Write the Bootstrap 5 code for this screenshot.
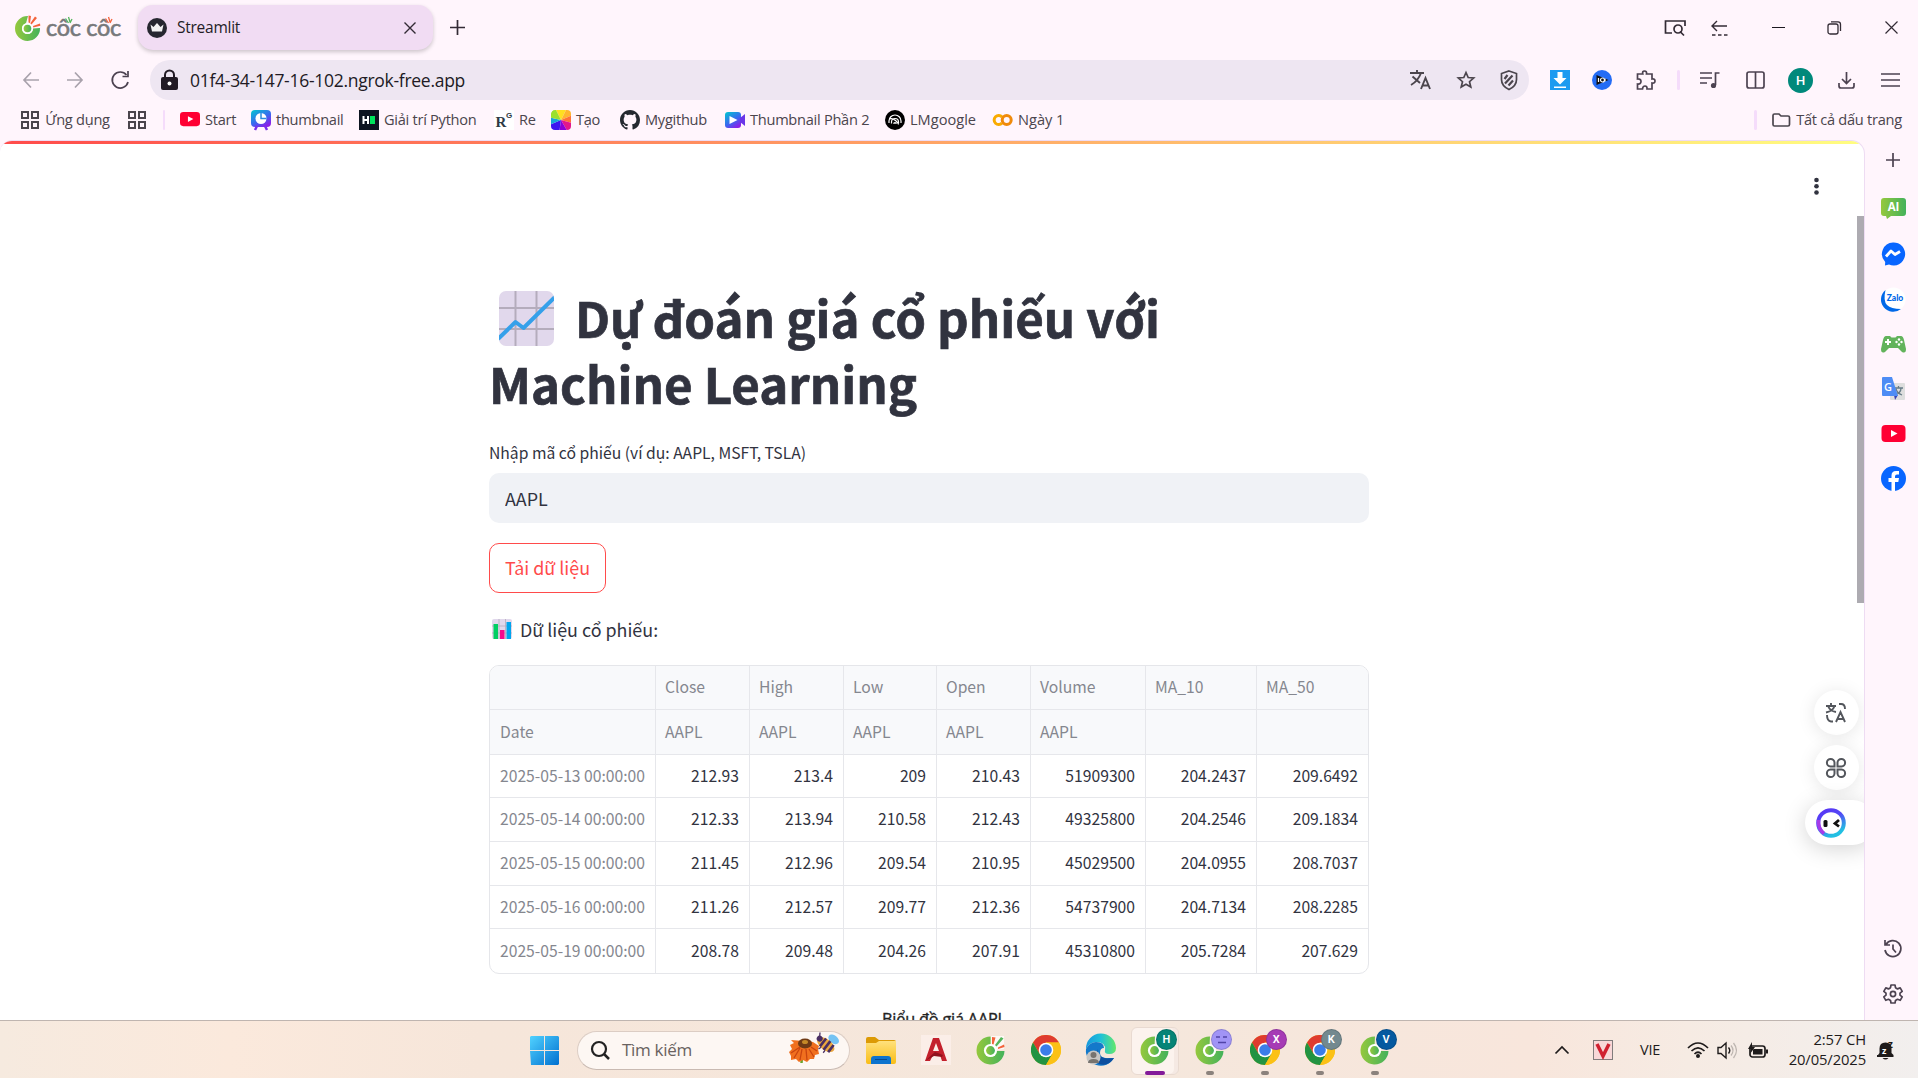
<!DOCTYPE html>
<html lang="vi">
<head>
<meta charset="utf-8">
<title>Streamlit</title>
<link href="https://cdn.jsdelivr.net/npm/bootstrap@5.3.0/dist/css/bootstrap.min.css" rel="stylesheet">
<style>
html,body{height:100%}
body{background:#fff5fc;font-family:"Open Sans","Noto Sans",sans-serif;color:#4b454d;overflow:hidden}
svg{display:block;flex:none;overflow:visible}
.ln{fill:none;stroke:currentColor;stroke-width:1.7}
.slot{flex:none;display:flex;align-items:center;justify-content:center}
.tabs-row{height:55px;color:#332b35}
.brand-box{width:138px;padding-left:13px}
.brand-name{font:400 23.5px/1 Lato,sans-serif;color:#77797b;-webkit-text-stroke:.6px #77797b;margin-left:3px;letter-spacing:-.3px;white-space:nowrap}
.tab-pill{width:295px;height:45px;margin-top:5px;border-radius:15px;background:#f1dcf3;box-shadow:0 2px 4px #0003;padding:0 9px 0 9px}
.tab-title{font-size:15.5px;color:#241d26;letter-spacing:-.25px;margin-left:10px}
.tools-row{height:50px}
.omni{width:1379px;height:40px;border-radius:20px;background:#eee6f2;padding-left:11px}
.url{font-size:17.5px;letter-spacing:-.28px;color:#211a24;margin-left:12px}
.marks-row{height:35px;font-size:14.6px;letter-spacing:-.27px;color:#4b454d;white-space:nowrap;padding:0 0 5px 21px}
.mk{flex:none;display:flex;align-items:center}
.mk svg{margin-right:5px}
.vsep{width:3px;height:20px;background:#f5dcfb;border-radius:2px;flex:none}
.stage{height:880px}
.view{width:1865px;background:#fff;border:1px solid #eedcf3;border-width:1px 1px 0 0;border-radius:12px 14px 0 0;overflow:hidden;position:relative}
.decor{height:3px;background:linear-gradient(90deg,#ff4b4b,#fffd80)}
.side{width:53px;color:#4c4250;padding:0 0 4px 3px}
.app{width:880px;margin:140px 0 0 489px;font-family:"Noto Sans CJK JP","Noto Sans",sans-serif;color:#31333f}
.app h1{font-size:49.2px;line-height:66px;font-weight:700;margin:0;color:#31333f;white-space:nowrap;height:132px;-webkit-text-stroke:.7px #31333f}
.h-ico{display:inline-block;margin:0 21px 0 10px;position:relative;top:3px;vertical-align:-5px}
.lab{font-size:15.7px;line-height:24px;margin-top:25px}
.inp{height:50px;border:0;background:#f0f2f6;border-radius:10px;margin-top:8px;padding:0 16px 1px;font-size:17.9px;color:#31333f;box-shadow:none}
.go{width:117px;height:50px;border:1px solid #ff4b4b;color:#ff4b4b;border-radius:10px;margin-top:20px;padding:0 0 1px;font-size:17.9px;background:#fff}
.cap{font-size:17.9px;height:32px;margin-top:20px}
.frame{border:1px solid #e5e6ea;border-radius:10px;overflow:hidden;margin-top:20px;height:309px}
.frame table{table-layout:fixed;width:880px;margin:0 -1px 0 -1px;border-collapse:separate;border-spacing:0;font-size:15.7px}
.frame th,.frame td{height:43.7px;padding:0 10px;border-right:1px solid #e6e7eb;border-bottom:1px solid #e6e7eb;line-height:1.2;font-weight:400;text-align:right;vertical-align:middle}
.frame thead th{background:#f8f9fb;color:#85878f;text-align:left;height:44.3px;padding-left:9px}
.frame tbody th,.frame tr>*:first-child{color:#85878f;text-align:left;padding-left:11px;white-space:nowrap}
.frame tr>*:last-child{border-right:0;padding-right:11px}
.frame tbody tr:last-child>*{border-bottom:0}
.plot-title{font:500 16.3px/20px "Open Sans",sans-serif;color:#222;margin:35px 0 0 393px;-webkit-text-stroke:.35px #222;letter-spacing:-.2px}
.kebab{position:absolute;left:1811px;top:36px}
.thumb{position:absolute;right:0;top:75px;width:7px;height:387px;background:#adabb1}
.fab{position:absolute;left:1814px;width:45px;height:45px;border-radius:50%;background:#fff;box-shadow:0 2px 18px #0000001a;display:flex;align-items:center;justify-content:center;color:#53565c;padding-right:2px}
.fab-a{top:549px}.fab-b{top:604px}
.fab-c{top:659px;left:1805px;width:70px;border-radius:23px;padding-right:18px;box-shadow:0 4px 22px #0000002b}
.taskbar{height:58px;border-top:1px solid #bfb5b0;background:linear-gradient(90deg,#f6eadf 0,#fbe9dc 12%,#f6e6da 25%,#f5e7dc 60%,#f8e6dc 80%,#f6ebe3 88%,#f2efee 100%);color:#1e1b1b;font-family:"Open Sans",sans-serif;padding:1px 0 0 530px}
.find{width:273px;height:39px;border-radius:20px;background:#fdf7f3;border:1px solid #dccdc4;border-bottom-color:#c9bab2;padding:0 11px 0 13px;margin-left:18px}
.find span{font-size:17px;color:#69625f;letter-spacing:-.3px;margin-left:12px}
.tk{width:54.9px;height:57px;position:relative;display:flex;align-items:center;justify-content:center;flex:none}
.tk-on{position:absolute;left:3px;top:5px;width:48px;height:48px;border-radius:6px;background:#fcf3ee;border:1px solid #e9dad1;box-shadow:inset -4px 0 #f5e9e3}
.tk>svg{position:relative}
.dot{position:absolute;bottom:4px;width:8px;height:4px;border-radius:2px;background:#8b827d}
.tk-on + .dot{width:20px;background:#831a99}
.who{position:absolute;left:28px;top:7px;width:21px;height:21px;border-radius:50%;color:#fff;font:600 11px/20px Roboto,sans-serif;text-align:center;border:1px solid #0002}
.clock{font-size:14.8px;line-height:20px;text-align:right;letter-spacing:-.12px;width:100px;margin:-2px 11px 0 -8px}
</style>
<script src="https://cdn.jsdelivr.net/npm/bootstrap@5.3.0/dist/js/bootstrap.bundle.min.js"></script>
</head>
<body class="d-flex flex-column">
<svg width="0" height="0" class="position-absolute">
<defs>
<linearGradient id="gc"><stop stop-color="#95c83d"/><stop offset="1" stop-color="#43b25b"/></linearGradient>
<linearGradient id="gw" x2="1" y2="1"><stop stop-color="#51d2ff"/><stop offset="1" stop-color="#0070d0"/></linearGradient>
<linearGradient id="gf" y2="1" x2="0"><stop stop-color="#ffe17d"/><stop offset="1" stop-color="#f9bd16"/></linearGradient>
<linearGradient id="ge" x2="1"><stop stop-color="#1698de"/><stop offset=".5" stop-color="#20c1d7"/><stop offset="1" stop-color="#64e86a"/></linearGradient>
<linearGradient id="gt" x2=".7" y2="1"><stop stop-color="#00c9cf"/><stop offset=".6" stop-color="#3a68f0"/><stop offset="1" stop-color="#8b20e8"/></linearGradient>
<linearGradient id="gr" x2=".5" y2="1"><stop stop-color="#5832f5"/><stop offset=".45" stop-color="#5448f5"/><stop offset="1" stop-color="#22bfe2"/></linearGradient>
<symbol id="coc" viewBox="0 0 30 30"><path d="M15 1.500A14 14 0 1 0 28.500 16L19 16A4.500 4.500 0 1 1 14.500 11.500Z" fill="url(#gc)"/><circle cx="14.500" cy="15.500" r="6.600" fill="#fff"/><circle cx="14.500" cy="15.500" r="4.400" fill="url(#gc)"/></symbol>
<symbol id="rays" viewBox="0 0 30 30"><path d="M14.500 1L28 1v13l-6 1-7-5z" fill="#fff" opacity=".75"/><path d="M16 2l3.500.5-2 7-1.500-.5z" fill="#f4643c"/><path d="M25 2l2.500 1.500-7 8-1.500-1.500z" fill="#54b65b"/><path d="M28 9.500l.5 2.500-6.500 2v-1.500z" fill="#f4643c"/></symbol>
<symbol id="chrome" viewBox="0 0 30 30"><circle cx="15" cy="15" r="15" fill="#fbc116"/><path d="M2 7.500A15 15 0 0 1 28 7.500H15L8.500 18.750z" fill="#df3b2f"/><path d="M2 7.500A15 15 0 0 0 15 30L21.500 18.750 8.500 18.750z" fill="#229342"/><path d="M15 30A15 15 0 0 0 28 7.500H15L21.500 18.750z" fill="#fbc116"/><circle cx="15" cy="15" r="7.300" fill="#fff"/><circle cx="15" cy="15" r="5.800" fill="#3b7de9"/></symbol>
<symbol id="yt" viewBox="0 0 24 18"><rect width="24" height="17" rx="4" fill="#ff0033"/><path d="M9.500 5v7l6.500-3.500z" fill="#fff"/></symbol>
<symbol id="apps" viewBox="0 0 18 18"><path d="M1 1h6v6H1zM11 1h6v6h-6zM1 11h6v6H1zM11 11h6v6h-6z" class="ln" style="stroke-width:2"/></symbol>
</defs>
</svg>

<header class="tabs-row d-flex align-items-center">
  <div class="brand-box slot justify-content-start">
    <svg width="30" height="30" viewBox="0 0 30 30"><path d="M15 3A12.500 12.500 0 1 0 27 15L20 15.500A5.500 5.500 0 1 1 13 10.200Z" fill="url(#gc)"/><circle cx="14.500" cy="15.500" r="5.500" fill="#fff"/><circle cx="14.500" cy="15.500" r="3.800" fill="url(#gc)"/><path d="M15.500 2.500l2.500.5-1 7-1.500-.5zM22 3.500l2 1.500-5.500 6.500-1.200-1.200zM27 10.500l.3 2.200-7 1.800-.3-1.500z" fill="#f4643c"/></svg>
    <span class="brand-name position-relative">côc côc<svg class="position-absolute" style="left:0;top:0" width="75" height="10"><path d="M19.500 2.500l3 4.500M22.500 1l1.500 5M26 3l-2 4" stroke="#54b65b" stroke-width="1.300"/><path d="M59.500 2.500l3 4.500M62.500 1l1.500 5M66 3l-2 4" stroke="#f4643c" stroke-width="1.300"/></svg></span>
  </div>
  <div class="tab-pill d-flex align-items-center align-self-start">
    <svg width="20" height="20" viewBox="0 0 20 20"><circle cx="10" cy="10" r="10" fill="#262730"/><path d="M3.500 6.500l3 2.500L10 5l3.500 4 3-2.500L15 13.500H5z" fill="#f2f2f2"/></svg>
    <span class="tab-title me-auto">Streamlit</span>
    <svg class="me-2" width="12" height="12"><path class="ln" style="stroke-width:1.400" d="M.5.5l11 11M11.500.5l-11 11"/></svg>
  </div>
  <div class="slot" style="width:49px"><svg width="15" height="15"><path class="ln" d="M7.500 0v15M0 7.500h15"/></svg></div>
  <div class="ms-auto d-flex">
    <div class="slot" style="width:22px"><svg width="22" height="18"><path class="ln" d="M8 14H1.500V2H21v5M20 16.500l-4-4"/><circle class="ln" cx="14" cy="10" r="4"/></svg></div>
    <div class="slot" style="width:66px"><svg width="17" height="16"><path class="ln" style="stroke-width:1.400" d="M16 6H1M6 1L1 6l5 5"/><path class="ln" style="stroke-width:1.400" stroke-dasharray="3.500 2.500" d="M1 15h16"/></svg></div>
    <div class="slot" style="width:52px"><svg width="13" height="12"><path d="M0 5.500h13" stroke="#1c1820"/></svg></div>
    <div class="slot" style="width:60px"><svg width="14" height="14"><rect class="ln" style="stroke-width:1.300" x="1" y="3" width="10" height="10" rx="2"/><path class="ln" style="stroke-width:1.300" d="M4 .8h7q2.500 0 2.500 2.500V10"/></svg></div>
    <div class="slot" style="width:54px"><svg width="13" height="13"><path class="ln" style="stroke-width:1.200" d="M.5.500l12 12M12.500.500l-12 12"/></svg></div>
  </div>
</header>

<nav class="tools-row d-flex align-items-center">
  <div class="d-flex" style="padding-left:8px;width:150px">
    <div class="slot" style="width:45px;color:#a9a2ac"><svg width="16" height="16"><path class="ln" d="M16 8H1M8 .500L1 8l7 7.500"/></svg></div>
    <div class="slot" style="width:44px;color:#a9a2ac"><svg width="16" height="16"><path class="ln" d="M0 8h15M8 .500L15 8l-7 7.500"/></svg></div>
    <div class="slot" style="width:46px;color:#4c4250"><svg width="18" height="18"><path class="ln" d="M15.500 4A8 8 0 1 0 17 11"/><path class="ln" d="M17 0v5.500h-5.500"/></svg></div>
  </div>
  <div class="omni d-flex align-items-center">
    <svg width="17" height="20"><rect y="7" width="17" height="13" rx="2" fill="#211a24"/><path d="M4 8V5a4.500 4.500 0 0 1 9 0v3" fill="none" stroke="#211a24" stroke-width="2"/><circle cx="8.500" cy="13.500" r="2" fill="#fff"/></svg>
    <span class="url me-auto">01f4-34-147-16-102.ngrok-free.app</span>
    <div class="slot" style="width:45px"><svg width="21" height="20"><path class="ln" style="stroke-width:1.900" d="M0 3h14M7 0v3M2.500 6.500L10 13M11 3Q8 11 1 15M11 19l4.500-11L20 19M12.500 15.500h6"/></svg></div>
    <div class="slot" style="width:45px"><svg width="18" height="18" viewBox="0 0 18 18"><path class="ln" d="M9 1.500l2.200 5 5.500.5-4.200 3.700 1.300 5.300L9 13.200 4.200 16l1.300-5.300L1.300 7l5.500-.5z"/></svg></div>
    <div class="slot" style="width:41px"><svg width="18" height="21"><path class="ln" d="M9 1l7.500 2.500v6Q16.500 16 9 19.500 1.500 16 1.500 9.500v-6z"/><path class="ln" style="stroke-width:2.200" d="M4.500 9l3-4M5 13.500l7.500-8M8.500 15.500l4.500-5"/></svg></div>
  </div>
  <div class="d-flex align-items-center" style="margin-left:10px;color:#4c4250">
    <div class="slot" style="width:42px"><svg width="20" height="20"><path fill="#1d9bf0" d="M0 0h20v20H0z"/><path fill="#fff" d="M7.500 2h5v6h4L10 14.500 3.500 8h4zM4 16.500h12V18H4z"/></svg></div>
    <div class="slot" style="width:42px"><svg width="20" height="20"><circle cx="10" cy="10" r="10" fill="#246cf5"/><path d="M4.500 5l6 2.500L16.500 10l-6 2.500L4.500 15z" fill="#111"/><circle cx="10.500" cy="10" r="2" fill="none" stroke="#fff" stroke-width="1.200"/><path d="M6.500 8v4M13 8.500v3" stroke="#fff" stroke-width="1.200"/></svg></div>
    <div class="slot" style="width:46px"><svg width="20" height="20"><path class="ln" d="M1.500 4h5.300Q6 1 8.500 1T10.500 4H16v5q3-.5 3 2t-3 2v6h-5q.3-3-2-3t-2.500 3h-5v-5q3.500.3 3.500-2.500T1.500 9z"/></svg></div>
    <div class="slot" style="width:18px"><span class="vsep"></span></div>
    <div class="slot" style="width:46px"><svg width="20" height="17"><path class="ln" d="M0 1h12M0 6h12M0 11h7M19.500 1H15.500v12"/><circle cx="13.500" cy="13.500" r="2.600" fill="currentColor"/></svg></div>
    <div class="slot" style="width:45px"><svg width="19" height="18"><rect class="ln" x="1" y="1" width="17" height="16" rx="2"/><path class="ln" d="M9.500 1v16"/></svg></div>
    <div class="slot" style="width:45px"><span class="slot rounded-circle text-white" style="width:25px;height:25px;background:#00897b;font:500 13px Roboto">H</span></div>
    <div class="slot" style="width:46px"><svg width="17" height="17"><path class="ln" d="M8.500 0v11M4 7l4.500 4.500L13 7M1 11v3q0 2 2 2h11q2 0 2-2v-3"/></svg></div>
    <div class="slot" style="width:43px"><svg width="19" height="14"><path class="ln" d="M0 1h19M0 7h19M0 13h19"/></svg></div>
  </div>
</nav>

<div class="marks-row d-flex align-items-center">
  <div class="mk" style="width:107px"><svg width="18" height="18"><use href="#apps"/></svg>&hairsp;Ứng dụng</div>
  <div class="mk" style="width:35px"><svg width="18" height="18"><use href="#apps"/></svg></div>
  <span class="vsep" style="margin-right:15px;width:2px"></span>
  <div class="mk" style="width:71px"><svg width="20" height="15"><use href="#yt"/></svg>Start</div>
  <div class="mk" style="width:108px"><svg width="20" height="20"><rect width="20" height="17" rx="4" fill="url(#gt)"/><path d="M6 16l-2 4M14 16l2 4" stroke="#7a30ea" stroke-width="2.500"/><circle cx="10" cy="8.500" r="5.500" fill="#fff"/><path d="M10 3v5.500h5.500" fill="none" stroke="#2a8ae0" stroke-width="1.500"/></svg>thumbnail</div>
  <div class="mk" style="width:135px"><svg width="20" height="20"><path d="M0 0h20v20H0z" fill="#0d1420"/><path d="M4.500 6v8M9 6v8M4 10h5" stroke="#fff" stroke-width="2"/><path d="M11 6h5v8h-5z" fill="#00e35c"/></svg>Giải trí Python</div>
  <div class="mk" style="width:57px"><svg width="20" height="20"><path d="M0 0h20v20H0z" fill="#fff"/><text x="1.500" y="17" font-family="Liberation Serif" font-weight="700" font-size="15" fill="#2d3b45">R</text><text x="12" y="8" font-family="Liberation Sans" font-size="8" font-weight="700" fill="#2d3b45">G</text></svg>Re</div>
  <div class="mk" style="width:69px"><svg width="20" height="20"><clipPath id="rc"><rect width="20" height="20" rx="4"/></clipPath><g clip-path="url(#rc)"><path d="M10 10L4-2h12z" fill="#ffdf20"/><path d="M10 10l6-12 8 6z" fill="#ffb52e"/><path d="M10 10l14-6v10z" fill="#ff7137"/><path d="M10 10l14 4-6 10z" fill="#e3178b"/><path d="M10 10l8 14H8z" fill="#8a00d8"/><path d="M10 10L8 24-4 16z" fill="#3c14f0"/><path d="M10 10L-4 16V7z" fill="#16a5d8"/><path d="M10 10L-4 7 4-2z" fill="#9be02c"/></g></svg>Tạo</div>
  <div class="mk" style="width:105px"><svg width="20" height="20" viewBox="0 0 16 16"><path fill="#24292f" d="M8 0C3.580 0 0 3.580 0 8c0 3.540 2.290 6.530 5.470 7.590.4.070.55-.17.55-.38 0-.19-.01-.82-.01-1.490-2.010.37-2.530-.49-2.690-.94-.09-.23-.48-.94-.82-1.130-.28-.15-.68-.52-.01-.53.63-.01 1.080.58 1.230.82.72 1.210 1.870.87 2.330.66.070-.52.280-.87.510-1.070-1.780-.2-3.640-.89-3.640-3.950 0-.87.310-1.590.82-2.150-.08-.2-.36-1.020.08-2.120 0 0 .67-.21 2.200.82.64-.18 1.320-.27 2-.27s1.360.09 2 .27c1.530-1.040 2.200-.82 2.200-.82.44 1.100.16 1.920.08 2.120.51.560.82 1.270.82 2.150 0 3.070-1.870 3.750-3.650 3.950.29.250.54.730.54 1.480 0 1.070-.01 1.930-.01 2.200 0 .21.150.46.550.38A8.010 8.010 0 0 0 16 8c0-4.420-3.580-8-8-8z"/></svg>Mygithub</div>
  <div class="mk" style="width:160px"><svg width="20" height="17"><rect y="1" width="16" height="16" rx="3" fill="url(#gt)"/><path d="M15 7l5-4v12l-5-4z" fill="#6a35e8"/><path d="M4.500 5v8l8-4z" fill="#fff"/></svg>Thumbnail Phần 2</div>
  <div class="mk" style="width:108px"><svg width="20" height="20"><circle cx="10" cy="10" r="10"/><path d="M4 13V11a6 6 0 0 1 12 0v2M6.500 13.500V12a3.500 3.500 0 0 1 7 0v1.500M9 14v-1a1.500 1.500 0 0 1 2 0v1M4.500 9q3-1 6 1.500t3 4" stroke="#fff" stroke-width="1.200" fill="none"/></svg><span style="letter-spacing:0">LMgoogle</span></div>
  <div class="mk"><svg width="20" height="12"><path d="M9 3a4.500 4.500 0 1 0 0 6" fill="none" stroke="#f9ab00" stroke-width="3"/><circle cx="13.700" cy="6" r="4.500" fill="none" stroke="#f08a0a" stroke-width="3"/></svg><span style="letter-spacing:0">Ngày 1</span></div>
  <span class="vsep ms-auto" style="margin-right:15px"></span>
  <div class="mk" style="width:146px"><svg width="18" height="14"><path class="ln" d="M1 2.500Q1 1 2.500 1H7l2 2h7q1.500 0 1.500 1.500v7Q17.500 13 16 13H2.500Q1 13 1 11.500z"/></svg>&hairsp;Tất cả dấu trang</div>
</div>

<div class="stage d-flex">
  <main class="view">
    <div class="decor"></div>
    <div class="kebab"><svg width="11" height="18"><g fill="#31333f"><circle cx="5.500" cy="3" r="2.300"/><circle cx="5.500" cy="9.300" r="2.300"/><circle cx="5.500" cy="15.500" r="2.300"/></g></svg></div>
    <div class="app">
      <h1><svg class="h-ico" width="55" height="55" viewBox="0 0 55 55"><clipPath id="cc"><rect width="55" height="55" rx="7"/></clipPath><g clip-path="url(#cc)"><path d="M0 0h55v55H0z" fill="#e1d8ec"/><path d="M16.500 0v55M37.500 0v55M0 17h55M0 38h55" stroke="#b4acbc" stroke-width="2"/><path d="M-1 48L16.500 31l8 6L56 6" fill="none" stroke="#35a0ea" stroke-width="4" stroke-linejoin="round"/></g></svg>Dự đoán giá cổ phiếu với<br>Machine Learning</h1>
      <div class="lab">Nhập mã cổ phiếu (ví dụ: AAPL, MSFT, TSLA)</div>
      <input class="inp form-control" value="AAPL">
      <button class="go btn">Tải dữ liệu</button>
      <div class="cap d-flex align-items-center"><svg style="margin:0 8px 0 3px" width="20" height="20"><rect width="20" height="20" rx="2" fill="#e1d8ec"/><path d="M0 7h20M0 14h20M7 0v20M13.500 0v20" stroke="#b4acbc" stroke-width=".8"/><path fill="#00cf63" d="M1.500 5H6v15H1.500z"/><path fill="#f70a8d" d="M8 11h4.500v9H8z"/><path fill="#00a6ed" d="M14.500 3H19v17h-4.500z"/></svg>Dữ liệu cổ phiếu:</div>
      <div class="frame"><table>
        <colgroup><col style="width:167px"><col style="width:94px"><col style="width:94px"><col style="width:93px"><col style="width:94px"><col style="width:115px"><col style="width:111px"><col></colgroup>
        <thead><tr><th></th><th>Close</th><th>High</th><th>Low</th><th>Open</th><th>Volume</th><th>MA_10</th><th>MA_50</th></tr>
        <tr><th>Date</th><th>AAPL</th><th>AAPL</th><th>AAPL</th><th>AAPL</th><th>AAPL</th><th></th><th></th></tr></thead>
        <tbody>
        <tr><th>2025-05-13 00:00:00</th><td>212.93</td><td>213.4</td><td>209</td><td>210.43</td><td>51909300</td><td>204.2437</td><td>209.6492</td></tr>
        <tr><th>2025-05-14 00:00:00</th><td>212.33</td><td>213.94</td><td>210.58</td><td>212.43</td><td>49325800</td><td>204.2546</td><td>209.1834</td></tr>
        <tr><th>2025-05-15 00:00:00</th><td>211.45</td><td>212.96</td><td>209.54</td><td>210.95</td><td>45029500</td><td>204.0955</td><td>208.7037</td></tr>
        <tr><th>2025-05-16 00:00:00</th><td>211.26</td><td>212.57</td><td>209.77</td><td>212.36</td><td>54737900</td><td>204.7134</td><td>208.2285</td></tr>
        <tr><th>2025-05-19 00:00:00</th><td>208.78</td><td>209.48</td><td>204.26</td><td>207.91</td><td>45310800</td><td>205.7284</td><td>207.629</td></tr>
        </tbody></table></div>
      <div class="plot-title">Biểu đồ giá AAPL</div>
    </div>
    <div class="thumb"></div>
    <div class="fab fab-a"><svg width="20" height="20"><path class="ln" style="stroke-width:1.900" d="M0 3h10M5 0v3M2 3q2 5 8 6M8.500 3Q7 8 0 9.500M13 1h2q4 0 4 5M1 12q0 6 4 6.500h2M10 19l4.500-10L19 19M11.500 16h6"/></svg></div>
    <div class="fab fab-b"><svg width="20" height="20"><path class="ln" style="stroke-width:2" d="M8.500 8.500H4.500A3.800 3.800 0 1 1 8.500 4.500zM11.500 8.500V4.500A3.800 3.800 0 1 1 15.500 8.500zM8.500 11.500V15.500A3.800 3.800 0 1 1 4.500 11.500zM11.500 11.500H15.500A3.800 3.800 0 1 1 11.500 15.500z"/></svg></div>
    <div class="fab fab-c"><svg width="30" height="30"><circle cx="15" cy="15" r="12.800" fill="#fff" stroke="url(#gr)" stroke-width="4"/><path d="M2.500 12Q2 21 8 25.500" fill="none" stroke="#a63be8" stroke-width="3.500"/><rect x="7.500" y="12" width="4" height="7" rx="1.500" fill="#111"/><path d="M23 12l-4 3.500 4 3" fill="none" stroke="#111" stroke-width="2.800"/></svg></div>
  </main>
  <aside class="side d-flex flex-column align-items-center">
    <div class="slot" style="height:40px"><svg width="14" height="14"><path class="ln" d="M7 0v14M0 7h14"/></svg></div>
    <div class="slot" style="height:56px"><svg width="25" height="21"><path d="M3 0h19q3 0 3 3v12q0 3-3 3H10l-4 3-1-3H3q-3 0-3-3V3q0-3 3-3z" fill="url(#gc)"/><text x="12.500" y="13" text-anchor="middle" font-family="Open Sans" font-weight="700" font-size="11.500" fill="#fff">AI</text></svg></div>
    <div class="slot" style="height:35px"><svg width="24" height="24"><path d="M12 .5a11.500 11.500 0 1 1-4 22L4 23.500l.2-3.500A11.500 11.500 0 0 1 12 .5z" fill="#0866ff"/><path d="M5 14.500l5-5.500 4 3.500 5-3" stroke="#fff" stroke-width="2.800" fill="none" stroke-linejoin="round"/></svg></div>
    <div class="slot" style="height:56px"><svg width="25" height="25"><circle cx="12.500" cy="12.500" r="12" fill="#fff"/><path d="M4.500 3A12 12 0 0 0 20 22Q10 22 6 18T4.500 3z" fill="#0068e8"/><text x="14" y="14" text-anchor="middle" font-family="Lato" font-weight="900" font-size="8.500" fill="#0068e8">Zalo</text></svg></div>
    <div class="slot" style="height:34px"><svg width="25" height="18" viewBox="0 0 25 18"><path d="M5 1h4l1.500 1.500h4L16 1h4q2 0 3 4l2 9q0 5-4 3l-4-4H8l-4 4q-4 2-4-3l2-9q1-4 3-4z" fill="#62b35b"/><path d="M7 4v6M4 7h6" stroke="#fff" stroke-width="2"/><g fill="#fff"><circle cx="18" cy="4.500" r="1.200"/><circle cx="18" cy="9.500" r="1.200"/><circle cx="15.500" cy="7" r="1.200"/><circle cx="20.500" cy="7" r="1.200"/></g></svg></div>
    <div class="slot" style="height:55px"><svg width="25" height="24"><rect x="9" y="6" width="15" height="17" rx="1" fill="#dedede"/><path d="M13 11h9M17.500 9v2M14 18q6-2 6-7M15 12q1 4 6 6" stroke="#667b87" stroke-width="1.300" fill="none"/><path d="M13 18h4l-3 5z" fill="#3742b0"/><path d="M2 0h9l6 19H2q-1 0-1-1V1q0-1 1-1z" fill="#4d8cf5"/><text x="3" y="14" font-family="Open Sans" font-weight="600" font-size="11" fill="#fff">G</text></svg></div>
    <div class="slot" style="height:35px"><svg width="25" height="18"><use href="#yt"/></svg></div>
    <div class="slot" style="height:55px"><svg width="25" height="25"><circle cx="12.500" cy="12.500" r="12.500" fill="#0866ff"/><path d="M10.500 25v-9H7.500v-4h3V9.500Q10.500 5 15 5h3v3.500h-2q-2 0-2 2V12h4l-.7 4h-3.300v9z" fill="#fff"/></svg></div>
    <div class="slot mt-auto" style="height:45px"><svg width="18" height="18"><path class="ln" d="M2 4.500A8 8 0 1 1 1 10M1 0v5h5M9 4.500V9l3 3.500"/></svg></div>
    <div class="slot" style="height:45px"><svg width="20" height="20" viewBox="0 0 20 20"><path class="ln" stroke-linejoin="round" d="M8 1h4l.5 2.700 2 1.200 2.700-1 2 3.500-2.200 1.700v2l2.200 1.700-2 3.500-2.700-1-2 1.200L12 19H8l-.5-2.500-2-1.200-2.700 1-2-3.500L3 11.100v-2L.8 7.400l2-3.500 2.700 1 2-1.200z"/><circle class="ln" cx="10" cy="10" r="2.600"/></svg></div>
  </aside>
</div>

<footer class="taskbar d-flex align-items-center">
  <svg width="29" height="29"><path fill="url(#gw)" d="M1 0h13v14H0V1zM15 0h13l1 1v13H15zM0 15h14v14H1zM15 15h14v13l-1 1H15z"/></svg>
  <div class="find d-flex align-items-center">
    <svg width="19" height="19"><circle cx="8" cy="8" r="7" fill="none" stroke="#222" stroke-width="2.200"/><path d="M13 13l5 5" stroke="#222" stroke-width="2.500"/></svg>
    <span class="me-auto">Tìm kiếm</span>
    <svg width="49" height="28"><path d="M13 18l-.5 9" stroke="#6ba52a" stroke-width="2.500"/><path d="M15 5L2 4l3 3-4 2 2 4-3 3 2 4 0 4 5-1 3 3 4-2 4 2 3-3 4 0 1-4 4-1-1-5 1-3-6-4z" fill="#f0701f"/><path d="M11 11L2 17M11 12L5 22M13 13l-2 11M17 13l1 11M20 13l5 8M22 11l6 4" stroke="#c9440f" stroke-width="1.300"/><ellipse cx="16" cy="7.500" rx="7" ry="5" fill="#6f3a15"/><ellipse cx="16" cy="6" rx="3" ry="2" fill="#c58a27"/><g transform="translate(38 7) rotate(38)"><ellipse cx="3" cy="-7" rx="6" ry="4" fill="#74c3f3"/><ellipse cx="0" cy="2" rx="10" ry="5.500" fill="#eaa63e"/><circle cx="-8.500" cy="1" r="3" fill="#492e62"/><path d="M-3.500-3v10M1.500-3.500v11M6.500-2.500v9" stroke="#492e62" stroke-width="2.600"/><path d="M-2 7l-1 3M3 7v3M-10-1l-2-3" stroke="#492e62" stroke-width="1.300"/></g></svg>
  </div>
  <div class="d-flex" style="margin-left:3.500px">
    <div class="tk"><svg width="30" height="27"><path d="M0 2q0-2 2-2h7l4 3h15q2 0 2 2v5H0z" fill="#dc9a05"/><path d="M0 6h10l3-2h17v21q0 2-2 2H2q-2 0-2-2z" fill="url(#gf)"/><path d="M5 27v-5q0-3 3-3h14q3 0 3 3v5z" fill="#0d74ce"/><path d="M9 22.500h12" stroke="#054b91"/></svg></div>
    <div class="tk"><svg width="30" height="30"><path d="M0 0h30v30H0z" fill="#fbeee8"/><path d="M4 26L12 3h6l8 23h-5l-2-6h-7l-3 6zM12 16h6l-3-8z" fill="#c3202c"/><path d="M4 26l10-9 8 3-1 2-8-1z" fill="#91121d"/></svg></div>
    <div class="tk"><svg width="30" height="30"><use href="#coc"/><use href="#rays"/></svg></div>
    <div class="tk"><svg width="30" height="30"><use href="#chrome"/></svg></div>
    <div class="tk"><svg width="30" height="30"><path d="M0 14A15 15 0 0 1 30 13q0 6-7 6-5 0-4-4 1-8-9-8Q4 7 0 14z" fill="url(#ge)"/><path d="M0 14Q4 7 10 7q8 0 8 6-4 0-4 5 0 6 10 5h4A15 15 0 0 1 0 14z" fill="#1479ca"/><path d="M12 14q-2 11 16 9-6 9-15 6-6-4-1-15z" fill="#0d4f9f"/><circle cx="7.500" cy="22.500" r="7" fill="#c7c5c3"/><circle cx="7.500" cy="20" r="3" fill="#77736f"/><path d="M2 28q0-4 5.500-4t5.500 4z" fill="#77736f"/></svg></div>
    <div class="tk"><div class="tk-on"></div><i class="dot"></i><svg width="30" height="30"><use href="#coc"/></svg><span class="who" style="background:#058477">H</span></div>
    <div class="tk"><svg width="30" height="30"><use href="#coc"/></svg><i class="dot"></i><span class="who" style="background:#a194f6"><svg width="19" height="19"><path d="M4 7h4M11 7h4M6 12.500h8" stroke="#5144a8" stroke-width="1.500"/></svg></span></div>
    <div class="tk"><svg width="30" height="30"><use href="#chrome"/></svg><i class="dot"></i><span class="who" style="background:#a63bb5">X</span></div>
    <div class="tk"><svg width="30" height="30"><use href="#chrome"/></svg><i class="dot"></i><span class="who" style="background:#73898f">K</span></div>
    <div class="tk"><svg width="30" height="30"><use href="#coc"/></svg><i class="dot"></i><span class="who" style="background:#0559a0">V</span></div>
  </div>
  <div class="ms-auto d-flex align-items-center">
    <div class="slot" style="width:26px"><svg width="14" height="8"><path class="ln" d="M.5 7.500L7 1l6.500 6.500"/></svg></div>
    <div class="slot" style="width:55px"><svg width="20" height="20"><rect x=".5" y=".5" width="19" height="19" fill="#f8d8d8" stroke="#817c7c"/><path d="M4 4l6 12 6-12" fill="none" stroke="#d02030" stroke-width="3.500"/></svg></div>
    <div class="slot" style="width:40px;font-size:14.500px;letter-spacing:-.3px">VIE</div>
    <div class="slot" style="width:29px;margin-left:13px"><svg width="20" height="16"><path class="ln" d="M0 6q10-10 20 0M3.500 9q6.500-6.500 13 0M6.500 12q3.500-3.500 7 0"/><circle cx="10" cy="14" r="2" fill="currentColor"/></svg></div>
    <div class="slot" style="width:30px"><svg width="20" height="17"><path class="ln" style="stroke-width:1.400" d="M1 5.500h3L9 1v15l-5-4.500H1zM11.500 5.500q2.500 3 0 6"/><path d="M14 3.500q4 5 0 10M16.500 1q6 7.500 0 15" fill="none" stroke="#bdb5b0" stroke-width="1.300"/></svg></div>
    <div class="slot" style="width:32px"><svg width="20" height="16"><rect class="ln" x="2" y="4" width="15" height="11" rx="2.500"/><path d="M5 7h9.500v5.500H5zM18 7.500h2v4h-2zM4 0L0 7h3l-1 5 5-7H4z" fill="currentColor"/></svg></div>
    <div class="clock">2:57 CH<br>20/05/2025</div>
    <svg style="margin-right:24px" width="17" height="19"><path d="M1 14l1.500-2V7.500q0-6 6-6t6 6V12l2 2v2H0v-2zM5.500 17h6q-3 3-6 0z" fill="currentColor"/><text x="5" y="13" font-size="9" font-weight="700" font-family="Open Sans" fill="#fff">z</text><text x="11" y="7" font-size="10" font-weight="700" font-family="Open Sans" fill="currentColor">z</text></svg>
  </div>
</footer>
</body>
</html>
